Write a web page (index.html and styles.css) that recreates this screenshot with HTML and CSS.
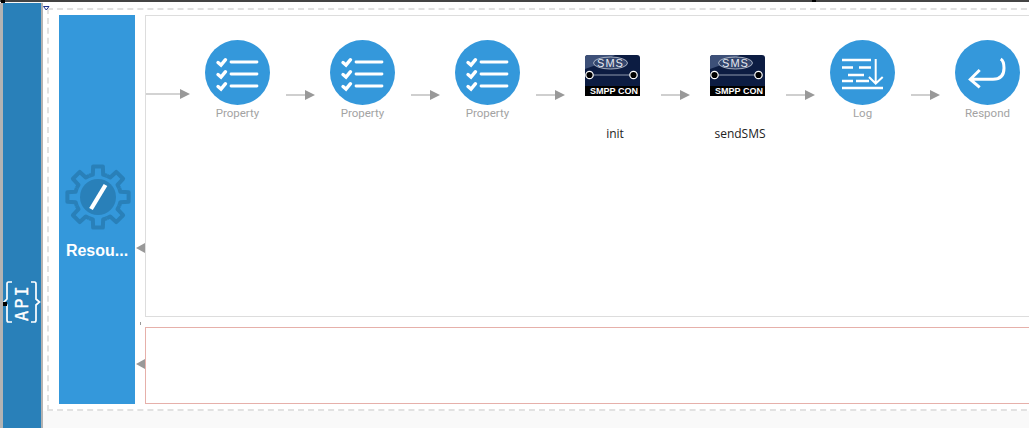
FILE: index.html
```html
<!DOCTYPE html>
<html lang="en">
  <head>
    <meta charset="UTF-8" />
    <title>API Resource</title>
    <link rel="stylesheet" href="styles.css">
  </head>
  <body>
    <svg class="defs" width="0" height="0">
      <symbol id="icon-property" viewBox="0 0 65 65">
        <circle cx="32.5" cy="32.5" r="32.5" fill="#3498db" />
        <g fill="none" stroke="#fff" stroke-linecap="round">
          <path stroke-width="2.8" d="M26 22H52M26 34H52M26 46H52" />
          <path stroke-width="3.4" d="M13 22.5l3 2.6 4.5-5.4M13 34.5l3 2.6 4.5-5.4M13 46.5l3 2.6 4.5-5.4" />
        </g>
      </symbol>
      <symbol id="arrow-right" viewBox="0 0 60 12">
        <path d="M16 6H35" stroke="#c4c4c4" stroke-width="1.6" />
        <path d="M35 1L45 6L35 11Z" fill="#999" />
      </symbol>
      <path id="gear-tooth" d="M24.2 11.75L27.83 10.59L28.15 2.38H37.85L38.17 10.59L41.8 11.75" fill="none" stroke="#2980b9" stroke-width="4" stroke-linejoin="round" />
    </svg>

    <div class="top-line">
      <span class="handle handle-first"></span>
      <span class="handle handle-mid"></span>
    </div>

    <div class="main">
      <div class="api-bar">
        <span class="handle handle-api"></span>
        <svg class="api-logo" width="38" height="44" viewBox="0 0 38 44">
          <g fill="none" stroke="#fff" stroke-width="1.7">
            <path d="M9 2H5.500Q4 2 4 4V19L1 22L4 25V40Q4 42 5.500 42H9" />
            <path d="M28 2H31.500Q33 2 33 4V19L36.500 22L33 25V40Q33 42 31.500 42H28" />
          </g>
          <text class="api-text" transform="translate(25 41) rotate(-90)">API</text>
        </svg>
      </div>

      <div class="canvas">
        <svg class="marker" width="7" height="5" viewBox="0 0 7 5"><path d="M0.500 0.500H6L3.250 4Z" fill="#fff" stroke="#1a2f8a" /></svg>
        <div class="sequence">
          <div class="resource">
            <svg class="gear" width="66" height="66" viewBox="0 0 66 66">
              <use href="#gear-tooth" />
              <use href="#gear-tooth" transform="rotate(45 33 33)" />
              <use href="#gear-tooth" transform="rotate(90 33 33)" />
              <use href="#gear-tooth" transform="rotate(135 33 33)" />
              <use href="#gear-tooth" transform="rotate(180 33 33)" />
              <use href="#gear-tooth" transform="rotate(225 33 33)" />
              <use href="#gear-tooth" transform="rotate(270 33 33)" />
              <use href="#gear-tooth" transform="rotate(315 33 33)" />
              <circle cx="33" cy="33" r="18" fill="#2980b9" />
              <path d="M26 45L40.500 21" stroke="#fff" stroke-width="4.200" />
            </svg>
            <div class="resource-name">Resou...</div>
          </div>

          <div class="flows">
            <div class="flow flow-main">
              <span class="back-arrow back-arrow-main"></span>
              <svg class="link link-first" viewBox="0 0 44 12"><path d="M0 6H34" stroke="#c4c4c4" stroke-width="1.600" /><path d="M34 1L44 6L34 11Z" fill="#999" /></svg>
              <div class="node"><svg class="node-icon"><use href="#icon-property" /></svg><span class="node-label">Property</span></div>
              <svg class="link"><use href="#arrow-right" /></svg>
              <div class="node"><svg class="node-icon"><use href="#icon-property" /></svg><span class="node-label">Property</span></div>
              <svg class="link"><use href="#arrow-right" /></svg>
              <div class="node"><svg class="node-icon"><use href="#icon-property" /></svg><span class="node-label">Property</span></div>
              <svg class="link"><use href="#arrow-right" /></svg>
              <div class="node">
                <svg class="connector-icon" viewBox="0 0 55 41">
                  <path d="M3 0H52Q55 0 55 3V31H0V3Q0 0 3 0Z" fill="#0c1c42" />
                  <path d="M3 0H30Q16 9 0 14V3Q0 0 3 0Z" fill="#3d5078" />
                  <ellipse cx="25.500" cy="8" rx="17" ry="6" fill="#33456c" stroke="#b4bccb" stroke-width="0.900" />
                  <text class="sms-text" x="25.500" y="12" text-anchor="middle">SMS</text>
                  <path d="M8 20H45" stroke="#8d97ab" stroke-width="1" />
                  <circle cx="4.500" cy="20" r="3.700" fill="#000" stroke="#fff" stroke-width="1.200" />
                  <circle cx="48.500" cy="20" r="3.700" fill="#000" stroke="#fff" stroke-width="1.200" />
                  <rect y="31" width="55" height="10" fill="#000" />
                  <text class="smpp-text" x="29" y="39" text-anchor="middle">SMPP CON</text>
                </svg>
                <span class="connector-label">init</span>
              </div>
              <svg class="link"><use href="#arrow-right" /></svg>
              <div class="node">
                <svg class="connector-icon" viewBox="0 0 55 41">
                  <path d="M3 0H52Q55 0 55 3V31H0V3Q0 0 3 0Z" fill="#0c1c42" />
                  <path d="M3 0H30Q16 9 0 14V3Q0 0 3 0Z" fill="#3d5078" />
                  <ellipse cx="25.500" cy="8" rx="17" ry="6" fill="#33456c" stroke="#b4bccb" stroke-width="0.900" />
                  <text class="sms-text" x="25.500" y="12" text-anchor="middle">SMS</text>
                  <path d="M8 20H45" stroke="#8d97ab" stroke-width="1" />
                  <circle cx="4.500" cy="20" r="3.700" fill="#000" stroke="#fff" stroke-width="1.200" />
                  <circle cx="48.500" cy="20" r="3.700" fill="#000" stroke="#fff" stroke-width="1.200" />
                  <rect y="31" width="55" height="10" fill="#000" />
                  <text class="smpp-text" x="29" y="39" text-anchor="middle">SMPP CON</text>
                </svg>
                <span class="connector-label">sendSMS</span>
              </div>
              <svg class="link"><use href="#arrow-right" /></svg>
              <div class="node">
                <svg class="node-icon" viewBox="0 0 65 65">
                  <circle cx="32.500" cy="32.500" r="32.500" fill="#3498db" />
                  <g fill="none" stroke="#fff" stroke-width="2.500">
                    <path d="M12 20H41M12 27.500H23M29 27.500H41M18 35H34M12 41H23M26 41H39M12 48H53" />
                    <path stroke-width="2" d="M45.700 19V43.500M39 37L45.700 43.500L52.700 37" />
                  </g>
                </svg>
                <span class="node-label">Log</span>
              </div>
              <svg class="link"><use href="#arrow-right" /></svg>
              <div class="node">
                <svg class="node-icon" viewBox="0 0 65 65">
                  <circle cx="32.500" cy="32.500" r="32.500" fill="#3498db" />
                  <path d="M45.700 19Q49 21 49 28Q49 39.300 38 39.300H15.300M24.700 30L15.300 39.300L24.700 47.300" fill="none" stroke="#fff" stroke-width="3" />
                </svg>
                <span class="node-label">Respond</span>
              </div>
            </div>
            <div class="flow flow-fault">
              <span class="tick"></span>
              <span class="back-arrow back-arrow-fault"></span>
            </div>
          </div>
        </div>
      </div>
    </div>
  </body>
</html>
```

FILE: styles.css
```css
html,
body {
  margin: 0;
  padding: 0;
  width: 1029px;
  height: 428px;
  overflow: hidden;
  background-color: #f9f9f9;
  font-family: "Roboto", sans-serif;
}

.defs {
  position: absolute;
}

.top-line {
  position: relative;
  height: 2px;
  background-color: #444;
}

.handle {
  position: absolute;
  width: 4px;
  height: 4px;
  background-color: #000;
}

.handle-first {
  left: 1px;
  top: 0;
}

.handle-mid {
  left: 812px;
  top: -1px;
}

.handle-api {
  left: 0;
  top: 299px;
}

.main {
  display: flex;
  height: 426px;
}

.api-bar {
  position: relative;
  flex: none;
  box-sizing: border-box;
  width: 43px;
  margin-top: 1px;
  background-color: #2980b9;
  border-left: 3px solid #b3b3b3;
  border-right: 2px solid #b3b3b3;
  display: flex;
  justify-content: center;
  align-items: flex-start;
}

.api-logo {
  margin-top: 277px;
}

.api-text {
  font-family: "DejaVu Sans Mono", monospace;
  font-size: 17px;
  letter-spacing: 2px;
  fill: #fff;
  stroke: #fff;
  stroke-width: 0.3px;
}

.canvas {
  position: relative;
  flex: 1;
  height: 409px;
  background-color: #fff;
}

.marker {
  position: absolute;
  left: 0;
  top: 4px;
}

.sequence {
  display: flex;
  gap: 10px;
  box-sizing: border-box;
  width: 1000px;
  height: 403px;
  margin: 6px 0 0 4px;
  padding: 5px 10px;
  border: 2px dashed #e2e2e2;
  border-right: none;
}

.resource {
  flex: none;
  width: 76px;
  background-color: #3498db;
  display: flex;
  flex-direction: column;
  align-items: center;
}

.gear {
  margin-top: 149px;
  margin-left: 2px;
}

.resource-name {
  margin-top: 12px;
  font-family: "Liberation Sans", sans-serif;
  font-size: 16px;
  font-weight: bold;
  color: #fff;
}

.flows {
  flex: none;
  width: 900px;
  display: flex;
  flex-direction: column;
  gap: 10px;
}

.flow {
  position: relative;
  box-sizing: border-box;
}

.flow-main {
  height: 302px;
  border: 1px solid #dddddd;
  display: flex;
  align-items: flex-start;
  padding-top: 24px;
}

.flow-fault {
  height: 77px;
  border: 1px solid #e6b0aa;
}

.tick {
  position: absolute;
  left: -6px;
  top: -6px;
  width: 1px;
  height: 3px;
  background-color: #999;
}

.back-arrow {
  position: absolute;
  left: -10px;
  width: 0;
  height: 0;
  border-top: 5px solid transparent;
  border-bottom: 5px solid transparent;
  border-right: 9px solid #999;
}

.back-arrow-main {
  top: 227px;
}

.back-arrow-fault {
  top: 31px;
}

.link {
  flex: none;
  width: 60px;
  height: 12px;
  margin-top: 49px;
}

.link-first {
  width: 44px;
  margin-top: 48px;
  margin-right: 15px;
}

.node {
  flex: none;
  width: 65px;
  display: flex;
  flex-direction: column;
  align-items: center;
}

.node-icon {
  width: 65px;
  height: 65px;
}

.node-label {
  margin-top: 1px;
  font-size: 11.500px;
  line-height: 14px;
  color: #a3a3a3;
}

.connector-icon {
  width: 55px;
  height: 41px;
  margin-top: 15px;
}

.connector-label {
  margin-top: 30px;
  padding-left: 5px;
  font-family: "Open Sans", sans-serif;
  font-size: 12px;
  line-height: 16px;
  color: #222;
}

.sms-text {
  font-family: "Liberation Sans", sans-serif;
  font-size: 11px;
  letter-spacing: 1px;
  fill: #e6e9f0;
}

.smpp-text {
  font-family: "Liberation Sans", sans-serif;
  font-size: 9px;
  font-weight: bold;
  fill: #fff;
}
```
